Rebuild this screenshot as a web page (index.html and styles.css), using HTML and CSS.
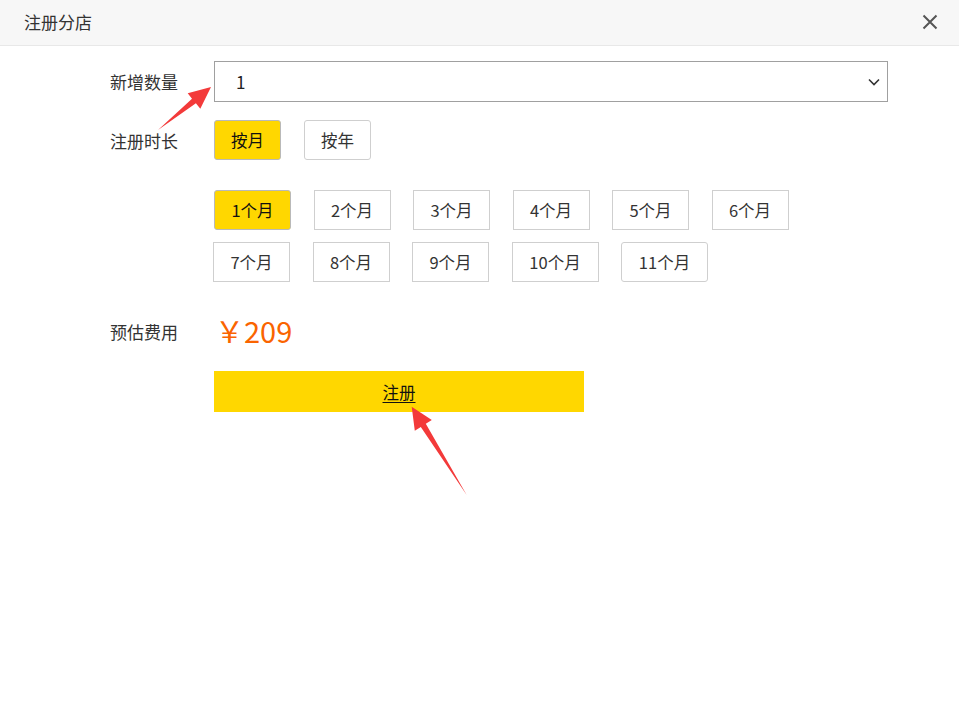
FILE: index.html
```html
<!DOCTYPE html>
<html lang="zh-CN">
<head>
<meta charset="utf-8">
<title>注册分店</title>
<link rel="stylesheet" href="styles.css">
</head>
<body>
<div class="dialog">
  <div class="header">
    <span class="title">注册分店</span>
    <svg class="close" width="16" height="16" viewBox="0 0 16 16"><path d="M1.5 1.5L14.5 14.5M14.5 1.5L1.5 14.5" stroke="#555" stroke-width="2" fill="none"/></svg>
  </div>
  <div class="content">
    <div class="row row-qty">
      <div class="label">新增数量</div>
      <div class="select">
        <span class="select-value">1</span>
        <svg class="chevron" width="12" height="8" viewBox="0 0 12 8"><path d="M1 1.5L6 6.5L11 1.5" stroke="#333" stroke-width="1.6" fill="none"/></svg>
      </div>
    </div>
    <div class="row row-period">
      <div class="label">注册时长</div>
      <div class="btns">
        <div class="opt opt-type active">按月</div>
        <div class="opt opt-type rounded">按年</div>
      </div>
    </div>
    <div class="row row-months">
      <div class="label"></div>
      <div class="months">
        <div class="mline">
          <div class="opt month active">1个月</div>
          <div class="opt month">2个月</div>
          <div class="opt month">3个月</div>
          <div class="opt month">4个月</div>
          <div class="opt month">5个月</div>
          <div class="opt month">6个月</div>
        </div>
        <div class="mline">
          <div class="opt month">7个月</div>
          <div class="opt month">8个月</div>
          <div class="opt month">9个月</div>
          <div class="opt month wide">10个月</div>
          <div class="opt month wide rounded">11个月</div>
        </div>
      </div>
    </div>
    <div class="row row-price">
      <div class="label">预估费用</div>
      <div class="price">￥209</div>
    </div>
    <div class="row row-submit">
      <div class="label"></div>
      <a class="submit" href="#">注册</a>
    </div>
  </div>
  <svg class="arrows" width="959" height="716" viewBox="0 0 959 716">
    <polygon fill="#f33a3a" points="211,87 187.7,93.2 192,98.7 158,130 195.9,103.3 200.3,108.8"/>
    <polygon fill="#f33a3a" points="411.7,406.7 414.8,430.7 420.8,427 466.7,495 425.8,423.8 431.8,420.1"/>
  </svg>
</div>
</body>
</html>
```

FILE: styles.css
```css
* { box-sizing: border-box; }
html, body {
  margin: 0;
  padding: 0;
  background: #fff;
  font-family: "Noto Sans CJK SC", "Noto Sans", sans-serif;
  color: #333;
}
.dialog {
  position: relative;
  width: 959px;
  height: 716px;
  overflow: hidden;
}
.header {
  height: 46px;
  background: #f7f7f7;
  border-bottom: 1px solid #e8e8e8;
  display: flex;
  align-items: center;
  justify-content: space-between;
  padding: 0 21px 0 24px;
}
.title {
  font-size: 17px;
  color: #333;
  line-height: 1;
  margin-top: -2px;
}
.close { display: block; margin-top: -2px; }
.content {
  padding: 15px 0 0 110px;
  display: flex;
  flex-direction: column;
}
.row {
  display: flex;
  align-items: center;
}
.label {
  width: 104px;
  flex: none;
  font-size: 17px;
  color: #333;
  line-height: 1;
}
.row-period { margin-top: 18px; }
.row-months { margin-top: 30px; align-items: flex-start; }
.row-price { margin-top: 29px; height: 40px; }
.row-submit { margin-top: 20px; }

.select {
  width: 674px;
  height: 41px;
  border: 1px solid #a0a0a0;
  display: flex;
  align-items: center;
  justify-content: space-between;
  padding: 0 7px 0 21px;
}
.select-value { font-size: 17px; color: #222; }
.chevron { display: block; }

.btns { display: flex; gap: 23px; }
.opt {
  height: 40px;
  display: flex;
  align-items: center;
  justify-content: center;
  border: 1px solid #cfcfcf;
  background: #fff;
  font-size: 16.5px;
  color: #333;
  line-height: 1;
}
.opt.rounded { border-radius: 3px; }
.opt.active {
  background: #ffd700;
  border-color: #b9b9b9;
  border-radius: 3px;
  color: #111;
}
.opt-type { width: 67px; }
.months { display: flex; flex-direction: column; gap: 12px; margin-left: -1px; }
.mline { display: flex; column-gap: 22.5px; }
.mline:first-child { margin-left: 1px; }
.month { width: 77px; }
.month.wide { width: 87px; }

.price {
  font-size: 29px;
  color: #fa6400;
  line-height: 1;
  padding-left: 1px;
  margin-top: -2px;
}
.submit {
  width: 370px;
  height: 41px;
  background: #ffd700;
  display: flex;
  align-items: center;
  justify-content: center;
  color: #111;
  font-size: 16.5px;
  text-decoration: underline;
  text-underline-offset: 3px;
}
.arrows {
  position: absolute;
  left: 0;
  top: 0;
  pointer-events: none;
}
```
